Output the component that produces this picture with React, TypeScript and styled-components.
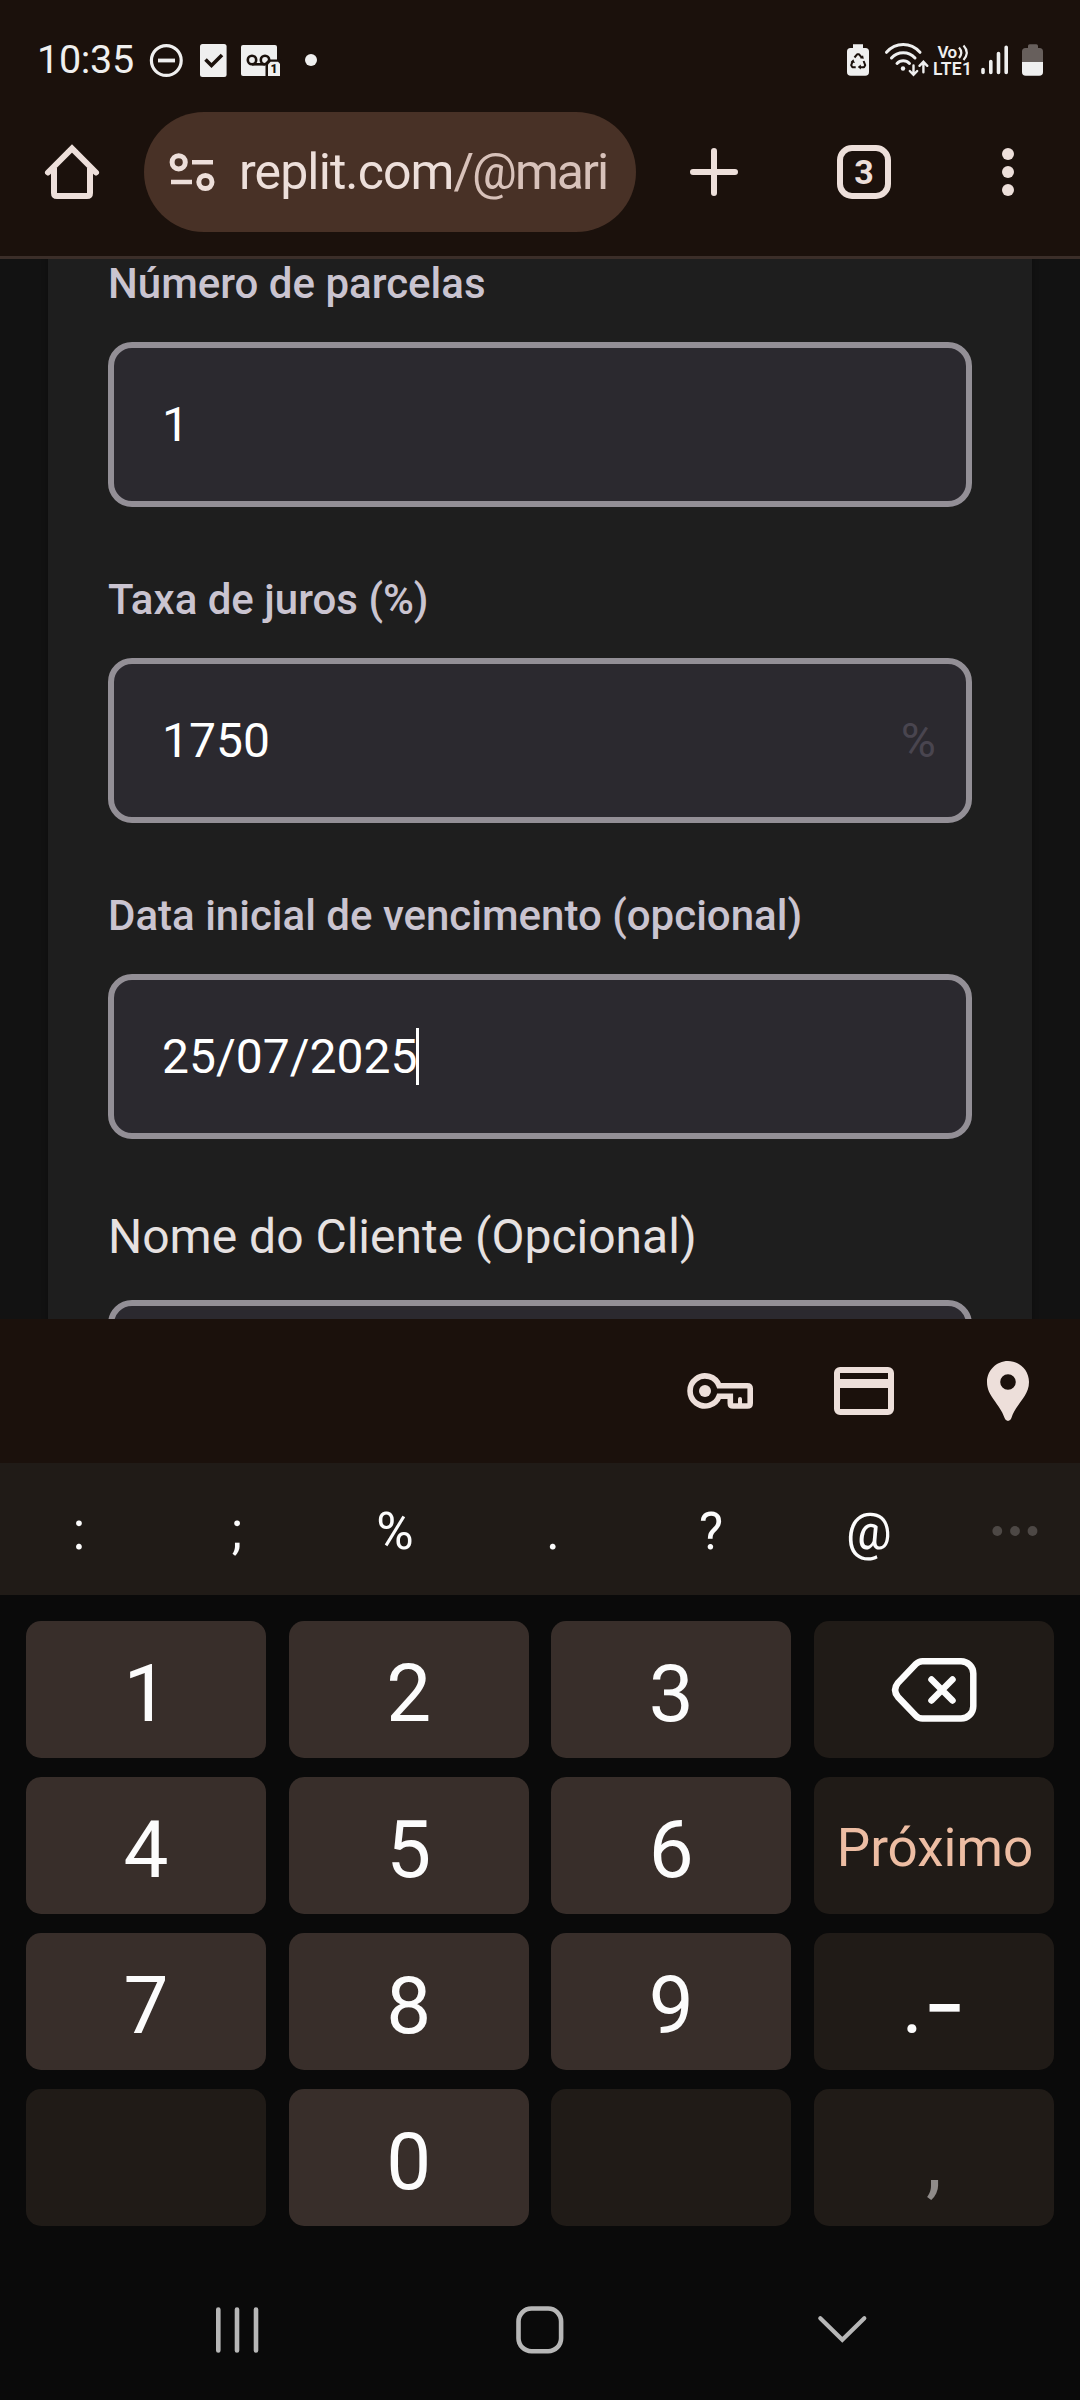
import React from 'react';
import styled, { createGlobalStyle } from 'styled-components';

const chrome = '#1b110c';
const ink = '#eddfda';
const statusInk = '#efefef';

const GlobalStyle = createGlobalStyle`
  * { box-sizing: border-box; }
  body { margin: 0; background: #0a0a0a; font-family: Roboto, 'Liberation Sans', sans-serif; }
  svg { display: block; flex: none; }
`;

const Screen = styled.div`
  width: 1080px;
  height: 2400px;
  display: flex;
  flex-direction: column;
  overflow: hidden;
  background: #0a0a0a;
`;

const StatusBar = styled.header`
  height: 112px;
  flex: none;
  padding: 8px 36px 0 37px;
  display: flex;
  align-items: center;
  justify-content: space-between;
  background: ${chrome};
`;

const StatusGroup = styled.div<{ $gap: number }>`
  display: flex;
  align-items: center;
  gap: ${(p) => p.$gap}px;
`;

const Clock = styled.time`
  width: 98px;
  font-size: 39.5px;
  line-height: 40px;
  letter-spacing: -0.3px;
  white-space: nowrap;
  color: ${statusInk};
`;

const Toolbar = styled.nav`
  height: 147px;
  flex: none;
  display: flex;
  align-items: flex-start;
  background: ${chrome};
  border-bottom: 3px solid #3b2e29;
`;

const ToolButton = styled.div<{ $width?: number }>`
  width: ${(p) => p.$width ?? 144}px;
  height: 120px;
  display: flex;
  align-items: center;
  justify-content: center;
`;

const AddressPill = styled.div`
  width: 492px;
  height: 120px;
  padding-left: 24px;
  display: flex;
  align-items: center;
  border-radius: 60px;
  background: #483126;
`;

const Url = styled.span`
  margin-left: 21px;
  font-size: 50px;
  line-height: 60px;
  letter-spacing: -0.9px;
  white-space: nowrap;
  color: ${ink};
`;

const UrlPath = styled.span`
  letter-spacing: -2px;
  color: #d8c2ba;
`;

const TabCount = styled.div`
  width: 54px;
  height: 54px;
  border: 6px solid ${ink};
  border-radius: 15px;
  display: flex;
  align-items: center;
  justify-content: center;
  font-size: 34px;
  line-height: 42px;
  font-weight: 700;
  color: ${ink};
`;

const Page = styled.main`
  height: 1060px;
  flex: none;
  padding: 0 48px;
  overflow: hidden;
  background: #121212;
`;

const Card = styled.section`
  height: 1120px;
  margin-top: -5px;
  padding: 0 60px;
  background: #1e1e1e;
  box-shadow: 0 0 6px rgba(0, 0, 0, 0.35);
`;

const Field = styled.div<{ $plain?: boolean }>`
  display: flex;
  flex-direction: column;
  gap: ${(p) => (p.$plain ? 27 : 28)}px;
  padding-bottom: ${(p) => (p.$plain ? 0 : 63)}px;
  margin-top: ${(p) => (p.$plain ? -1 : 0)}px;
`;

const Label = styled.label<{ $plain?: boolean }>`
  font-size: ${(p) => (p.$plain ? 48 : 42)}px;
  line-height: ${(p) => (p.$plain ? 72 : 60)}px;
  font-weight: ${(p) => (p.$plain ? 400 : 500)};
  color: ${(p) => (p.$plain ? '#e6e1e1' : '#cac4d0')};
  white-space: nowrap;
`;

const Input = styled.div`
  height: 165px;
  padding: 0 30px 0 48px;
  display: flex;
  align-items: center;
  border: 6px solid #938f96;
  border-radius: 24px;
  background: #2b292f;
  font-size: 48px;
  line-height: 57px;
  color: #fff;
`;

const Caret = styled.i`
  width: 3px;
  height: 57px;
  margin-left: -1px;
  background: #fff;
`;

const Suffix = styled.span`
  margin-left: auto;
  color: #49454f;
`;

const AutofillBar = styled.div`
  height: 144px;
  flex: none;
  display: flex;
  justify-content: flex-end;
  align-items: center;
  background: ${chrome};
`;

const SymbolRow = styled.div`
  height: 132px;
  flex: none;
  display: grid;
  grid-template-columns: repeat(6, 158px) 1fr;
  align-items: center;
  justify-items: center;
  padding-top: 5px;
  background: #201b17;
  color: #fcfcfc;
  font-size: 51px;
  line-height: 60px;
`;

const Keypad = styled.div`
  flex: 1;
  padding: 26px 26px 0;
  display: grid;
  grid-template-columns: repeat(4, 240px);
  grid-auto-rows: 137px;
  justify-content: space-between;
  row-gap: 19px;
  align-content: start;
`;

const Key = styled.div<{ $kind: 'digit' | 'side' | 'action' | 'faded' }>`
  display: flex;
  align-items: center;
  justify-content: center;
  padding-top: ${(p) => (p.$kind === 'action' ? 5 : 8)}px;
  padding-left: ${(p) => (p.$kind === 'action' ? 2 : 0)}px;
  border-radius: 15px;
  white-space: nowrap;
  background: ${(p) => (p.$kind === 'digit' ? '#382e2a' : '#201b17')};
  color: ${(p) => (p.$kind === 'action' ? '#edbda3' : p.$kind === 'faded' ? '#8f8b89' : '#fcfcfc')};
  font-size: ${(p) => (p.$kind === 'action' ? 53 : 80)}px;
  line-height: 1;
`;

const IconKey = styled(Key)`
  padding-top: 0;
`;

const Dash = styled.span`
  padding-bottom: 5px;
  font-family: Inter, Roboto, sans-serif;
  font-size: 94px;
`;

const NavBar = styled.footer`
  height: 140px;
  flex: none;
  padding: 0 208px 0 207px;
  display: flex;
  align-items: center;
  justify-content: space-between;
`;

const StatusIcons = () => (
  <StatusBar>
    <StatusGroup $gap={13}>
      <Clock>10:35</Clock>
      <svg width="36" height="40" viewBox="148 40 36 40" fill="none" stroke={statusInk}>
        <circle cx="166.3" cy="60.5" r="14.9" strokeWidth="3.2" />
        <path d="M158 60.5h17" strokeWidth="3.8" />
      </svg>
      <svg width="30" height="40" viewBox="197 40 30 40">
        <rect x="200" y="44" width="26.6" height="33" rx="2.5" fill={statusInk} />
        <path d="M205.5 59.5l6 6 10.5-10.5" fill="none" stroke={chrome} strokeWidth="3.6" />
      </svg>
      <svg width="42" height="40" viewBox="240 40 42 40">
        <rect x="241" y="45" width="36" height="31" rx="2" fill={statusInk} />
        <g fill="none" stroke={chrome} strokeWidth="2.6">
          <circle cx="252" cy="60" r="4.2" />
          <circle cx="265" cy="60" r="4.2" />
          <path d="M252 64.3h13" />
        </g>
        <path d="M265.5 78V62.5l3-3H282V78z" fill={chrome} />
        <path d="M268 76V64.5l2.6-2.7h7.4l2 2V76z" fill={statusInk} />
        <text x="270.4" y="73.4" fontSize="12" fontWeight="900" fill={chrome}>1</text>
      </svg>
      <svg width="24" height="40" viewBox="295 40 24 40">
        <circle cx="311" cy="60" r="6" fill={statusInk} />
      </svg>
    </StatusGroup>
    <StatusGroup $gap={0}>
      <svg width="38" height="40" viewBox="846 40 38 40">
        <path d="M853 44.300h10V48h2.500a3.500 3.500 0 0 1 3.500 3.500V72a3.800 3.800 0 0 1-3.800 3.800h-14.400A3.800 3.800 0 0 1 847 72V51.500a3.500 3.500 0 0 1 3.500-3.500h2.500z" fill={statusInk} />
        <g fill="none" stroke={chrome} strokeWidth="2" strokeLinejoin="round">
          <path d="M854.500 57.500l2.600-3.200h2l2.700 3.300" />
          <path d="M852.800 61l-1.600 4.200 1.200 2h3.300" />
          <path d="M863.600 61l1.600 4.200-1.200 2h-4" />
        </g>
        <path d="M863.800 58.800l-3.800-.6 3-2.900zM850.500 62.200l2.800-2.900 1.600 3.600zM860.800 64.400v5.200l-3-2.600z" fill={chrome} />
      </svg>
      <svg width="48" height="40" viewBox="884 40 48 40" fill="none" stroke={statusInk} strokeLinecap="round">
        <path d="M886.500 52.300Q893.500 44.600 903.200 44.600T920 52.300" strokeWidth="3" />
        <path d="M891.500 58Q896 52.700 903.200 52.700T915 58" strokeWidth="3" />
        <path d="M897 63.500Q899.500 60.700 903.200 60.700T909.500 63.500" strokeWidth="3" />
        <circle cx="903" cy="68.500" r="2.200" fill={statusInk} stroke="none" />
        <path d="M913.500 65.500V74M909.800 71l3.700 3.800 3.700-3.800M923.400 72.300V62.500M919.500 65.800l3.900-4 3.900 4" strokeWidth="2.400" />
      </svg>
      <svg width="48" height="40" viewBox="932 40 48 40" fill={statusInk}>
        <text x="937.500" y="58" fontSize="17" fontWeight="600" textLength="19.500">Vo</text>
        <path d="M959 47.500q4.500 5 0 10.500M963.500 45.500q6.500 7 0 14.500" fill="none" stroke={statusInk} strokeWidth="2.200" />
        <text x="933" y="75" fontSize="17.500" fontWeight="600" textLength="39">LTE1</text>
      </svg>
      <svg width="40" height="40" viewBox="980 40 40 40" stroke={statusInk} strokeWidth="3.600" strokeLinecap="round">
        <path d="M983 69.500v3M990.800 61.500v11M998.500 53.500v19M1006.200 47.200v25.300" />
      </svg>
      <svg width="24" height="40" viewBox="1020 40 24 40">
        <path d="M1028 46a1.700 1.700 0 0 1 1.700-1.700h6.600a1.700 1.700 0 0 1 1.700 1.700v2h1.500a3.500 3.500 0 0 1 3.500 3.500V62h-21V51.500a3.500 3.500 0 0 1 3.500-3.500h2.500z" fill="#675f5c" />
        <path d="M1022 62h21v10a3.800 3.800 0 0 1-3.800 3.800h-13.400a3.800 3.800 0 0 1-3.800-3.800z" fill={statusInk} />
      </svg>
    </StatusGroup>
  </StatusBar>
);

const BrowserBar = () => (
  <Toolbar>
    <ToolButton>
      <svg width="72" height="72" viewBox="36 136 72 72" fill="none" stroke={ink} strokeWidth="6" strokeLinecap="round">
        <path d="M48 172.500L72 148.500l24 24" />
        <path d="M54 168v25q0 3 3 3h30q3 0 3-3v-25" strokeLinecap="butt" />
      </svg>
    </ToolButton>
    <AddressPill>
      <svg width="50" height="48" viewBox="168 148 50 48" fill="none" stroke={ink}>
        <circle cx="178.700" cy="162.300" r="6.600" strokeWidth="5" />
        <circle cx="205.400" cy="182" r="6.600" strokeWidth="5" />
        <path d="M192 162.300h21M171 182h21" strokeWidth="4.600" />
      </svg>
      <Url>replit.com<UrlPath>/@mari</UrlPath></Url>
    </AddressPill>
    <ToolButton $width={156}>
      <svg width="60" height="60" viewBox="0 0 60 60" stroke={ink} strokeWidth="6" strokeLinecap="round">
        <path d="M30 9v42M9 30h42" />
      </svg>
    </ToolButton>
    <ToolButton>
      <TabCount>3</TabCount>
    </ToolButton>
    <ToolButton>
      <svg width="12" height="48" viewBox="0 0 12 48" fill={ink}>
        <circle cx="6" cy="6" r="6" />
        <circle cx="6" cy="24" r="6" />
        <circle cx="6" cy="42" r="6" />
      </svg>
    </ToolButton>
  </Toolbar>
);

const LoanForm = () => (
  <Page>
    <Card>
      <Field>
        <Label>Número de parcelas</Label>
        <Input>1</Input>
      </Field>
      <Field>
        <Label>Taxa de juros (%)</Label>
        <Input>
          1750<Suffix>%</Suffix>
        </Input>
      </Field>
      <Field>
        <Label>Data inicial de vencimento (opcional)</Label>
        <Input>
          25/07/2025<Caret />
        </Input>
      </Field>
      <Field $plain>
        <Label $plain>Nome do Cliente (Opcional)</Label>
        <Input />
      </Field>
    </Card>
  </Page>
);

const Autofill = () => (
  <AutofillBar>
    <ToolButton>
      <svg width="72" height="72" viewBox="684 1355 72 72" fill="none" stroke={ink} strokeWidth="5.600">
        <path d="M719.100 1385.700A15 15 0 1 0 719.100 1396.200H730.300V1403.200Q730.300 1406 733.200 1406H747.300Q750.200 1406 750.200 1403.200V1388.500Q750.200 1385.700 747.300 1385.700Z" />
        <circle cx="705" cy="1391" r="6" fill={ink} stroke="none" />
        <path d="M738 1404v-5q0-2 2-2t2 2v5z" fill={ink} stroke="none" />
      </svg>
    </ToolButton>
    <ToolButton>
      <svg width="72" height="72" viewBox="0 0 72 72">
        <rect x="9" y="15" width="54" height="42" rx="3" fill="none" stroke={ink} strokeWidth="6" />
        <path d="M9 24h54v9H9z" fill={ink} />
      </svg>
    </ToolButton>
    <ToolButton>
      <svg width="72" height="72" viewBox="0 0 72 72" fill={ink} fillRule="evenodd">
        <path d="M36 6C24.400 6 15 15.400 15 27c0 14.500 12.500 21 17.700 36.200Q33.700 66 36 66t3.300-2.800C44.500 48 57 41.500 57 27 57 15.400 47.600 6 36 6zm0 13.200a7.800 7.800 0 1 1 0 15.600 7.800 7.800 0 0 1 0-15.600z" />
      </svg>
    </ToolButton>
  </AutofillBar>
);

const Symbols = () => (
  <SymbolRow>
    {[':', ';', '%', '.', '?', '@'].map((s) => (
      <span key={s}>{s}</span>
    ))}
    <svg width="50" height="14" viewBox="0 0 50 14" fill="#4d4845">
      <circle cx="8.300" cy="6" r="4.900" />
      <circle cx="26" cy="6" r="4.900" />
      <circle cx="43.500" cy="6" r="4.900" />
    </svg>
  </SymbolRow>
);

const Keyboard = () => (
  <Keypad>
    <Key $kind="digit">1</Key>
    <Key $kind="digit">2</Key>
    <Key $kind="digit">3</Key>
    <IconKey $kind="side">
      <svg width="96" height="80" viewBox="886 1650 96 80" fill="none" stroke="#fcfcfc" strokeWidth="6.500" strokeLinecap="round">
        <path d="M922.500 1661.300H961a12.300 12.300 0 0 1 12.300 12.300v32.600A12.300 12.300 0 0 1 961 1718.500H922.500q-3.800 0-6.600-2.800L898 1697q-5.800-7 0-14.200l17.900-18.700q2.800-2.800 6.600-2.800z" />
        <path d="M931.500 1679.500l21 21M952.500 1679.500l-21 21" />
      </svg>
    </IconKey>
    <Key $kind="digit">4</Key>
    <Key $kind="digit">5</Key>
    <Key $kind="digit">6</Key>
    <Key $kind="action">Próximo</Key>
    <Key $kind="digit">7</Key>
    <Key $kind="digit">8</Key>
    <Key $kind="digit">9</Key>
    <Key $kind="side">.<Dash>-</Dash></Key>
    <Key $kind="side" />
    <Key $kind="digit">0</Key>
    <Key $kind="side" />
    <Key $kind="faded">,</Key>
  </Keypad>
);

const SystemNav = () => (
  <NavBar>
    <svg width="60" height="60" viewBox="0 0 60 60" stroke="#b7b7b7" strokeWidth="4.600" strokeLinecap="round">
      <path d="M11.300 9.500v41M30 9.500v41M49 9.500v41" />
    </svg>
    <svg width="60" height="60" viewBox="0 0 60 60" fill="none" stroke="#b7b7b7" strokeWidth="4.600">
      <rect x="8.500" y="8.500" width="42.600" height="42.800" rx="13" />
    </svg>
    <svg width="60" height="60" viewBox="0 0 60 60" fill="none" stroke="#b7b7b7" strokeWidth="4.200" strokeLinecap="round">
      <path d="M8.300 18.300L30.300 39.800 52.300 18.300" />
    </svg>
  </NavBar>
);

export default function App() {
  return (
    <Screen>
      <GlobalStyle />
      <StatusIcons />
      <BrowserBar />
      <LoanForm />
      <Autofill />
      <Symbols />
      <Keyboard />
      <SystemNav />
    </Screen>
  );
}
